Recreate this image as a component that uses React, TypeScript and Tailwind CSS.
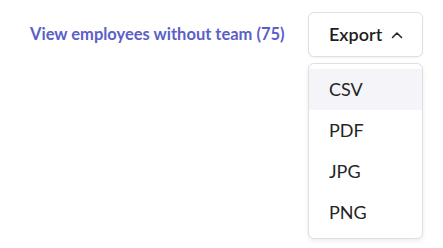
import React from "react";

const formats = ["CSV", "PDF", "JPG", "PNG"];

const ChevronUp = () => (
  <svg width="12" height="8" viewBox="0 0 12 8" fill="none" className="ml-auto">
    <path d="M1.5 6.5L6 2L10.5 6.5" stroke="#242424" strokeWidth="1.5" strokeLinecap="round" strokeLinejoin="round" />
  </svg>
);

const App = () => {
  return (
    <div
      className="w-[443px] h-[248px] bg-white pl-[30px] pt-3"
      style={{ fontFamily: "Lato, 'Noto Sans', sans-serif" }}
    >
      <div className="flex items-center">
        <span className="text-[16.5px] font-bold text-[#5b5fc7]">
          View employees without team (75)
        </span>
        <div className="relative ml-auto mr-[20px]">
          <button className="flex items-center w-[115px] h-[45px] pl-5 pr-[19px] bg-white border border-[#e0e0e0] rounded-md shadow-[0_1px_2px_rgba(0,0,0,0.06)] text-[18px] font-semibold text-[#1f1f1f]">
            Export
            <ChevronUp />
          </button>
          <div className="absolute left-0 top-[51px] w-[115px] py-[5px] bg-white border border-[#e0e0e0] rounded-md shadow-[0_2px_4px_rgba(0,0,0,0.08)]">
            {formats.map((f, i) => (
              <div
                key={f}
                className={`flex items-center h-[41px] px-5 text-[18px] text-[#242424] ${
                  i === 0 ? "bg-[#f5f5f9]" : ""
                }`}
              >
                {f}
              </div>
            ))}
          </div>
        </div>
      </div>
    </div>
  );
};

export default App;
